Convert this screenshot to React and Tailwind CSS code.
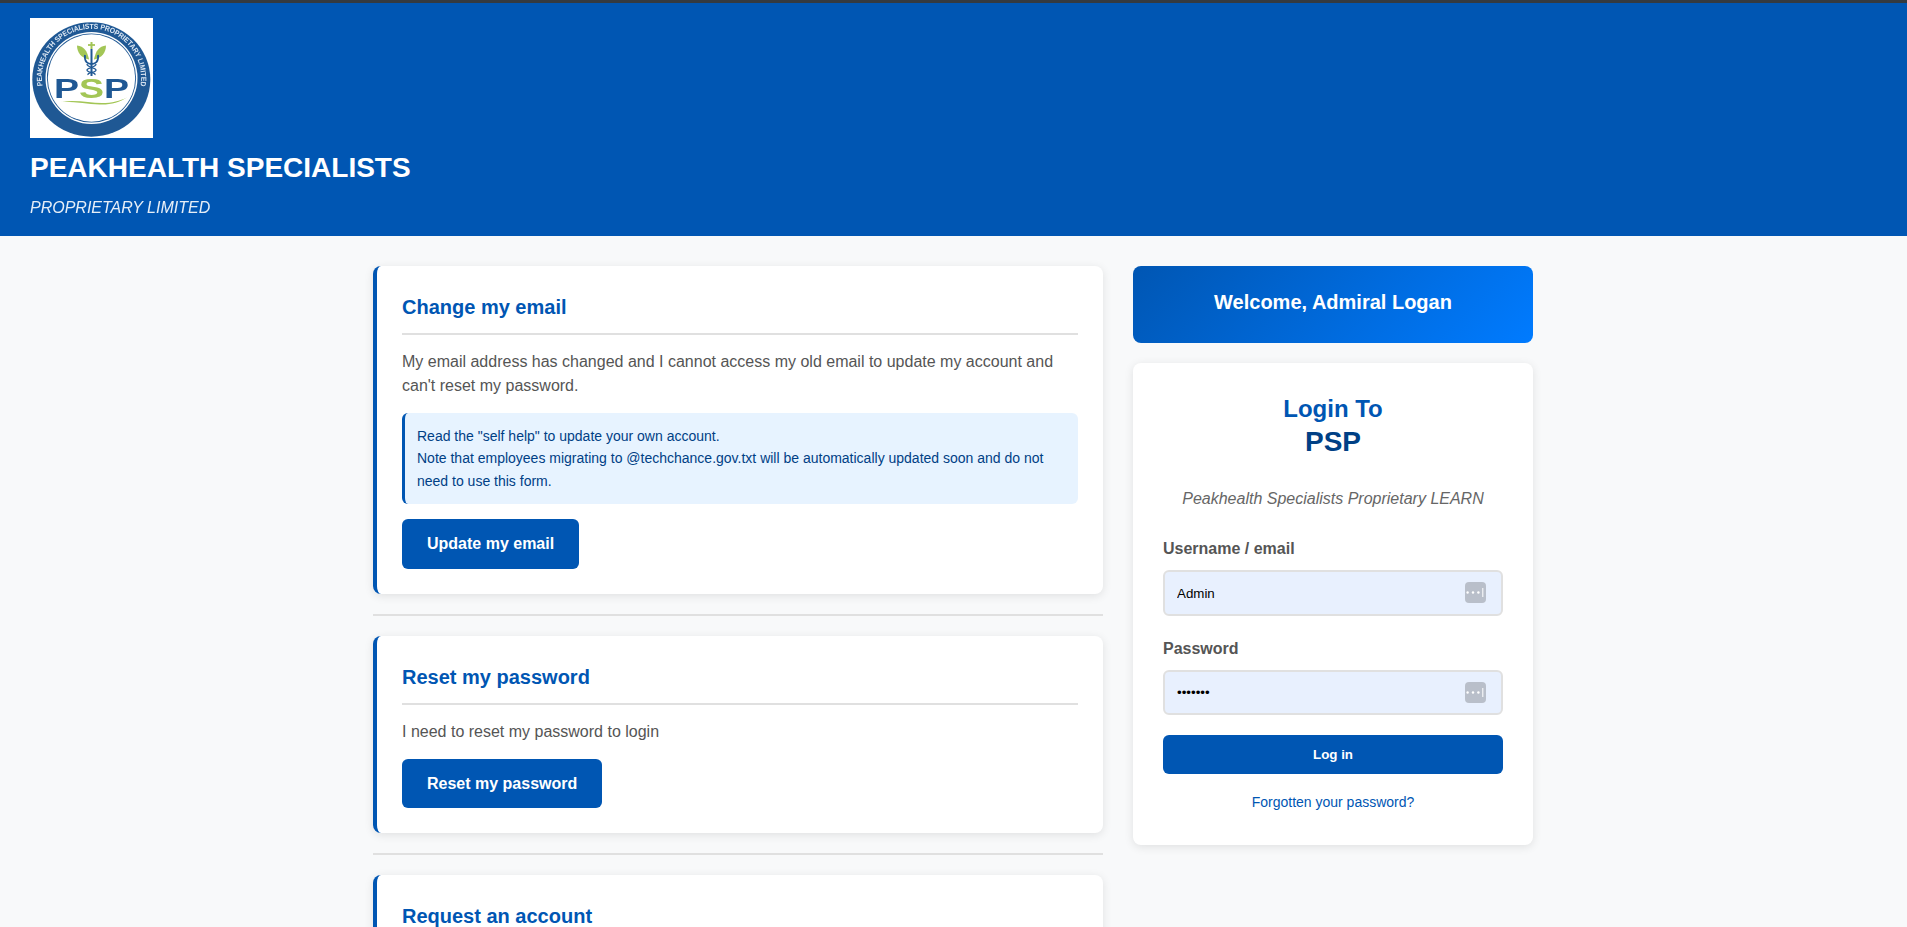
import { Fragment } from 'react';

const PSP_BLUE = '#1f5894';
const PSP_GREEN = '#a3c656';

// Round PSP badge from the header
const Logo = () => (
  <svg width="123" height="120" viewBox="0 0 123 120" className="block bg-white blur-[0.4px]">
    <defs>
      <path id="ring-text" d="M 12.5 68 A 49.6 49.6 0 1 1 110.5 68" fill="none" />
    </defs>
    <ellipse cx="61.3" cy="61.5" rx="59" ry="57.2" fill={PSP_BLUE} />
    <circle cx="61.5" cy="60" r="46" fill="#fff" />
    <circle cx="61.5" cy="60" r="44.6" fill={PSP_BLUE} />
    <circle cx="61.5" cy="60" r="43.7" fill="#fff" />
    <text fontFamily="Liberation Sans, sans-serif" fontSize="7.4" fontWeight="700" fill="#dfe9f4">
      <textPath href="#ring-text" textLength="171" lengthAdjust="spacingAndGlyphs">
        PEAKHEALTH SPECIALISTS PROPRIETARY LIMITED
      </textPath>
    </text>
    {/* leaves */}
    <path d="M59 41 C57 33 54 28 47 27.5 C47 34 51 40 59 41.5 Z" fill={PSP_GREEN} />
    <path d="M64 41 C66 33 69 28 76 27.5 C76 34 72 40 64 41.5 Z" fill={PSP_GREEN} />
    {/* caduceus */}
    <path d="M61.5 24 V31" stroke={PSP_GREEN} strokeWidth="2" fill="none" />
    <path d="M58 27 H65" stroke={PSP_GREEN} strokeWidth="1.8" fill="none" />
    <path d="M61.5 31 V58" stroke={PSP_BLUE} strokeWidth="2" fill="none" />
    <path d="M55 37 C54 44 58 46 61.5 46 C65 46 69 44 68 37" stroke={PSP_BLUE} strokeWidth="1.8" fill="none" />
    <path
      d="M57 46 C57 50 66 49 66 52 C66 55 57 54 58 57 M66 46 C66 50 57 49 57 52 C57 55 66 54 65 57"
      stroke={PSP_BLUE}
      strokeWidth="1.3"
      fill="none"
    />
    <text
      x="61.5"
      y="80"
      textAnchor="middle"
      fontFamily="Liberation Sans, sans-serif"
      fontSize="27.5"
      fontWeight="700"
      textLength="75"
      lengthAdjust="spacingAndGlyphs"
      fill={PSP_BLUE}
    >
      P<tspan fill={PSP_GREEN}>S</tspan>P
    </text>
    <path d="M30 84 C45 81 60 85 72 85 C82 85 90 83 97 79.5 C90 84 82 86.5 72 86.5 C58 87 45 83 30 84 Z" fill={PSP_GREEN} />
  </svg>
);

// The small key icon Chrome's autofill puts inside the field
const KeyBadge = () => (
  <span className="flex h-[21px] w-[21px] shrink-0 items-center justify-center rounded-[4px] bg-[#b9bfca]">
    <svg width="21" height="21" viewBox="0 0 21 21" className="blur-[0.2px]">
      <circle cx="2.6" cy="10.5" r="1.2" fill="#fff" />
      <circle cx="8" cy="10.5" r="1.2" fill="#fff" />
      <circle cx="13.4" cy="10.5" r="1.2" fill="#fff" />
      <path d="M17.8 6 V15" stroke="#fff" strokeWidth="1" />
    </svg>
  </span>
);

const Field = ({ label, value, type }) => (
  <div className="mb-[21px]">
    <label className="mb-[9px] block text-[16px] leading-[24px] font-bold text-[#555]">{label}</label>
    <div className="flex h-[45.6px] items-center rounded-[6px] border-2 border-[#e0e0e0] bg-[#e8f0fe] pr-[15px] pl-3">
      <input
        readOnly
        type={type}
        value={value}
        className="min-w-0 flex-1 bg-transparent pt-[2px] text-[13.33px] text-black outline-none"
      />
      <KeyBadge />
    </div>
  </div>
);

const cards = [
  {
    title: 'Change my email',
    text: "My email address has changed and I cannot access my old email to update my account and can't reset my password.",
    note: [
      'Read the "self help" to update your own account.',
      'Note that employees migrating to @techchance.gov.txt will be automatically updated soon and do not need to use this form.',
    ],
    button: 'Update my email',
  },
  {
    title: 'Reset my password',
    text: 'I need to reset my password to login',
    button: 'Reset my password',
  },
  {
    title: 'Request an account',
  },
];

const Card = ({ card }) => (
  <div className="rounded-[8px] border-l-4 border-[#0056b3] bg-white p-[25px] shadow-[0_2px_10px_rgba(0,0,0,0.1)]">
    <h3 className="border-b-2 border-[#e0e0e0] pb-[10px] text-[20px] leading-[32px] font-bold text-[#0056b3]">
      {card.title}
    </h3>
    {card.text && <p className="mt-[15px] text-[16px] leading-[24px] text-[#555]">{card.text}</p>}
    {card.note && (
      <div className="mt-[15px] rounded-[6px] border-l-[3px] border-[#0056b3] bg-[#e7f3ff] px-3 py-[12px] text-[14px] leading-[22.4px] text-[#004085]">
        {card.note.map((line, i) => (
          <Fragment key={i}>
            {i > 0 && <br />}
            {line}
          </Fragment>
        ))}
      </div>
    )}
    {card.button && (
      <button className="mt-[15px] block h-[49.5px] rounded-[6px] bg-[#0056b3] px-[25px] pt-px text-[16px] font-bold text-white">
        {card.button}
      </button>
    )}
  </div>
);

export default function App() {
  return (
    <div className="h-screen overflow-hidden bg-[#f8f9fa] font-['Liberation_Sans',Arial,sans-serif]">
      <header className="border-t-[3px] border-[#343a40] bg-[#0056b3] px-[30px] pt-[15px] pb-[16px] text-white">
        <Logo />
        <h1 className="mt-[14px] text-[28px] leading-[32px] font-bold">PEAKHEALTH SPECIALISTS</h1>
        <p className="mt-[12px] text-[16px] leading-[24px] italic opacity-90">PROPRIETARY LIMITED</p>
      </header>

      <main className="ml-[353px] flex w-[1200px] gap-[30px] px-5 pt-[30px]">
        <div className="w-[730px] shrink-0">
          {cards.map((card, i) => (
            <Fragment key={card.title}>
              {i > 0 && <hr className="my-5 border-t-2 border-[#e0e0e0]" />}
              <Card card={card} />
            </Fragment>
          ))}
        </div>

        <aside className="w-[400px] shrink-0">
          <div className="mb-5 flex h-[77px] justify-center rounded-[8px] bg-[linear-gradient(135deg,#0056b3,#007bff)] pt-[20px] text-[20px] leading-[32px] font-bold text-white">
            Welcome, Admiral Logan
          </div>
          <div className="rounded-[8px] bg-white p-[30px] pb-[31px] shadow-[0_2px_10px_rgba(0,0,0,0.1)]">
            <h2 className="text-center text-[24px] leading-[32px] font-bold text-[#0056b3]">
              Login To
              <span className="block text-[28px] leading-[34px] text-[#004085]">PSP</span>
            </h2>
            <p className="mt-[28px] mb-[26px] text-center text-[16px] leading-[24px] text-[#666] italic">
              Peakhealth Specialists Proprietary LEARN
            </p>
            <Field label="Username / email" value="Admin" type="text" />
            <Field label="Password" value="1234567" type="password" />
            <button className="-mt-[1px] block h-[39px] w-full rounded-[6px] bg-[#0056b3] text-[13.33px] font-bold text-white">
              Log in
            </button>
            <div className="mt-[17px] text-center text-[14px] leading-[23px] text-[#0056b3]">
              Forgotten your password?
            </div>
          </div>
        </aside>
      </main>
    </div>
  );
}
